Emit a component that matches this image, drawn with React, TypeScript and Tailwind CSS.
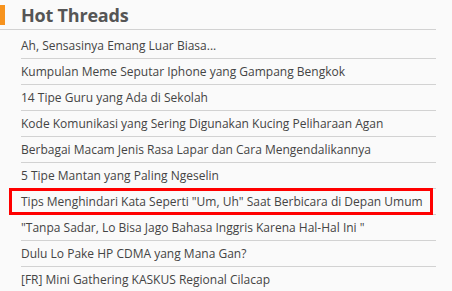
import React from "react";

const threads = [
  "Ah, Sensasinya Emang Luar Biasa...",
  "Kumpulan Meme Seputar Iphone yang Gampang Bengkok",
  "14 Tipe Guru yang Ada di Sekolah",
  "Kode Komunikasi yang Sering Digunakan Kucing Peliharaan Agan",
  "Berbagai Macam Jenis Rasa Lapar dan Cara Mengendalikannya",
  "5 Tipe Mantan yang Paling Ngeselin",
  'Tips Menghindari Kata Seperti "Um, Uh" Saat Berbicara di Depan Umum',
  '"Tanpa Sadar, Lo Bisa Jago Bahasa Inggris Karena Hal-Hal Ini "',
  "Dulu Lo Pake HP CDMA yang Mana Gan?",
  "[FR] Mini Gathering KASKUS Regional Cilacap",
];

export default function App() {
  return (
    <div
      className="w-[452px] h-[291px] overflow-hidden bg-[#fafafa]"
      style={{ fontFamily: '"Open Sans", sans-serif' }}
    >
      <div className="w-[436px] h-[30px] border-b border-[#d2d2d2] flex items-center">
        <div className="w-[5px] h-[20px] bg-[#f7931e] mt-[1px]" />
        <div className="ml-[16px] text-[18px] font-bold text-[#555] leading-none mt-[1px] tracking-[-0.2px]">
          Hot Threads
        </div>
      </div>
      <div className="ml-[21px] w-[415px] pt-[3px]">
        {threads.map((t, i) => (
          <div
            key={i}
            className="relative h-[26px] border-b border-[#d2d2d2] text-[12px] leading-[25px] text-[#444] whitespace-nowrap"
          >
            {t}
            {i === 6 && (
              <div className="absolute left-[-12px] top-[-1px] w-[424px] h-[27px] border-[3px] border-[#ff0000]" />
            )}
          </div>
        ))}
      </div>
    </div>
  );
}
